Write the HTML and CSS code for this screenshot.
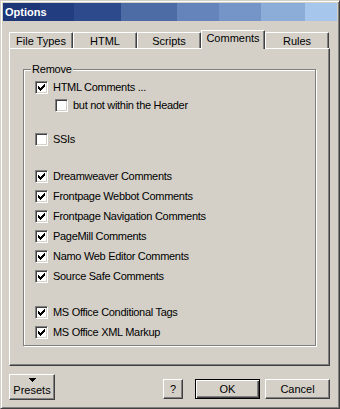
FILE: index.html
```html
<!DOCTYPE html>
<html>
<head>
<meta charset="utf-8">
<link rel="stylesheet" href="styles.css">
</head>
<body>
<div class="window">
  <div class="titlebar"><span class="title">Options</span></div>
  <div class="main">
    <div class="tabs">
      <div class="tab">File Types</div>
      <div class="tab">HTML</div>
      <div class="tab">Scripts</div>
      <div class="tab active">Comments</div>
      <div class="tab">Rules</div>
    </div>
    <div class="panel">
      <div class="group">
        <span class="legend">Remove</span>
        <div class="row first"><span class="cb"><svg width="7" height="7" viewBox="0 0 7 7" shape-rendering="crispEdges"><path d="M0 2h1v3h-1zM1 3h1v3h-1zM2 4h1v3h-1zM3 3h1v3h-1zM4 2h1v3h-1zM5 1h1v3h-1zM6 0h1v3h-1z" fill="#000"/></svg></span><span class="lbl">HTML Comments ...</span></div>
        <div class="row nested"><span class="cb"></span><span class="lbl">but not within the Header</span></div>
        <div class="row sep1"><span class="cb"></span><span class="lbl">SSIs</span></div>
        <div class="row sep2"><span class="cb"><svg width="7" height="7" viewBox="0 0 7 7" shape-rendering="crispEdges"><path d="M0 2h1v3h-1zM1 3h1v3h-1zM2 4h1v3h-1zM3 3h1v3h-1zM4 2h1v3h-1zM5 1h1v3h-1zM6 0h1v3h-1z" fill="#000"/></svg></span><span class="lbl">Dreamweaver Comments</span></div>
        <div class="row"><span class="cb"><svg width="7" height="7" viewBox="0 0 7 7" shape-rendering="crispEdges"><path d="M0 2h1v3h-1zM1 3h1v3h-1zM2 4h1v3h-1zM3 3h1v3h-1zM4 2h1v3h-1zM5 1h1v3h-1zM6 0h1v3h-1z" fill="#000"/></svg></span><span class="lbl">Frontpage Webbot Comments</span></div>
        <div class="row"><span class="cb"><svg width="7" height="7" viewBox="0 0 7 7" shape-rendering="crispEdges"><path d="M0 2h1v3h-1zM1 3h1v3h-1zM2 4h1v3h-1zM3 3h1v3h-1zM4 2h1v3h-1zM5 1h1v3h-1zM6 0h1v3h-1z" fill="#000"/></svg></span><span class="lbl">Frontpage Navigation Comments</span></div>
        <div class="row"><span class="cb"><svg width="7" height="7" viewBox="0 0 7 7" shape-rendering="crispEdges"><path d="M0 2h1v3h-1zM1 3h1v3h-1zM2 4h1v3h-1zM3 3h1v3h-1zM4 2h1v3h-1zM5 1h1v3h-1zM6 0h1v3h-1z" fill="#000"/></svg></span><span class="lbl">PageMill Comments</span></div>
        <div class="row"><span class="cb"><svg width="7" height="7" viewBox="0 0 7 7" shape-rendering="crispEdges"><path d="M0 2h1v3h-1zM1 3h1v3h-1zM2 4h1v3h-1zM3 3h1v3h-1zM4 2h1v3h-1zM5 1h1v3h-1zM6 0h1v3h-1z" fill="#000"/></svg></span><span class="lbl">Namo Web Editor Comments</span></div>
        <div class="row"><span class="cb"><svg width="7" height="7" viewBox="0 0 7 7" shape-rendering="crispEdges"><path d="M0 2h1v3h-1zM1 3h1v3h-1zM2 4h1v3h-1zM3 3h1v3h-1zM4 2h1v3h-1zM5 1h1v3h-1zM6 0h1v3h-1z" fill="#000"/></svg></span><span class="lbl">Source Safe Comments</span></div>
        <div class="row sep3"><span class="cb"><svg width="7" height="7" viewBox="0 0 7 7" shape-rendering="crispEdges"><path d="M0 2h1v3h-1zM1 3h1v3h-1zM2 4h1v3h-1zM3 3h1v3h-1zM4 2h1v3h-1zM5 1h1v3h-1zM6 0h1v3h-1z" fill="#000"/></svg></span><span class="lbl">MS Office Conditional Tags</span></div>
        <div class="row"><span class="cb"><svg width="7" height="7" viewBox="0 0 7 7" shape-rendering="crispEdges"><path d="M0 2h1v3h-1zM1 3h1v3h-1zM2 4h1v3h-1zM3 3h1v3h-1zM4 2h1v3h-1zM5 1h1v3h-1zM6 0h1v3h-1z" fill="#000"/></svg></span><span class="lbl">MS Office XML Markup</span></div>
      </div>
    </div>
    <div class="buttons">
      <div class="btn presets"><svg class="arrow" width="7" height="4" viewBox="0 0 7 4" shape-rendering="crispEdges"><path d="M0 0h7v1h-1v1h-1v1h-1v1h-1v-1h-1v-1h-1v-1h-1z" fill="#000"/></svg><span>Presets</span></div>
      <div class="right">
        <div class="btn help">?</div>
        <div class="btn ok">OK</div>
        <div class="btn cancel">Cancel</div>
      </div>
    </div>
  </div>
</div>
</body>
</html>
```

FILE: styles.css
```css
* { box-sizing: border-box; margin: 0; padding: 0; }
html, body { background: #d4d0c8; }
body {
  margin: 0;
  font-family: "Liberation Sans", Arial, sans-serif;
  font-size: 11px;
  color: #000;
}
.window {
  width: 340px;
  height: 409px;
  background: #d4d0c8;
  border: 1px solid;
  border-color: #d4d0c8 #404040 #404040 #d4d0c8;
  box-shadow: inset 1px 1px #ffffff, inset -1px -1px #808080;
  padding: 2px;
  display: flex;
  flex-direction: column;
}
.titlebar {
  height: 18px;
  display: flex;
  align-items: center;
  padding-left: 2px;
  background: linear-gradient(to right,
    #1d3678 0, #1d3678 37px,
    #223d80 37px, #223d80 71px,
    #2c4a8c 71px, #2c4a8c 118px,
    #4d6ba4 118px, #4d6ba4 174px,
    #6584bc 174px, #6584bc 216px,
    #7595c8 216px, #7595c8 258px,
    #8badd8 258px, #8badd8 302px,
    #a6c6ec 302px, #a6c6ec 334px);
}
.title {
  color: #fff;
  font-weight: bold;
  font-size: 11px;
}
.main {
  flex: 1;
  padding: 9px 7px 0 6px;
  display: flex;
  flex-direction: column;
}
.tabs {
  display: flex;
  align-items: flex-end;
  height: 18px;
}
.tab {
  width: 64px;
  height: 16px;
  border-top: 1px solid #fff;
  border-left: 1px solid #fff;
  border-right: 1px solid #404040;
  border-top-left-radius: 1px;
  border-top-right-radius: 1px;
  box-shadow: inset -1px 0 #808080;
  text-align: center;
  line-height: 14px;
  padding-top: 1px;
  background: #d4d0c8;
}
.tab.active {
  height: 19px;
  margin-bottom: -1px;
  position: relative;
  z-index: 1;
  line-height: 14px;
  padding-top: 0;
}
.panel {
  width: 321px;
  height: 318px;
  border: 1px solid;
  border-color: #fff #404040 #404040 #fff;
  box-shadow: inset -1px -1px #808080;
  padding: 20px 0 0 13px;
}
.group {
  position: relative;
  width: 293px;
  height: 277px;
  border: 1px solid #808080;
  box-shadow: inset 1px 1px #fff, 1px 1px #fff;
  padding: 11px 0 0 11px;
}
.legend {
  position: absolute;
  left: 7px;
  top: -8px;
  padding: 0 1px;
  line-height: 14px;
  letter-spacing: -0.2px;
  background: #d4d0c8;
}
.row {
  display: flex;
  align-items: center;
  height: 13px;
  margin-top: 7px;
}
.row.first { margin-top: 0; }
.row.nested { margin-top: 5px; margin-left: 20px; }
.row.sep1 { margin-top: 21px; }
.row.sep2 { margin-top: 24px; }
.row.sep3 { margin-top: 23px; }
.cb {
  width: 13px;
  height: 13px;
  flex: none;
  background: #fff;
  border: 1px solid;
  border-color: #808080 #fff #fff #808080;
  box-shadow: inset 1px 1px #404040, inset -1px -1px #d4d0c8;
  display: flex;
  align-items: center;
  justify-content: center;
}
.cb svg { display: block; }
.lbl {
  margin-left: 5px;
  line-height: 13px;
  letter-spacing: -0.3px;
  white-space: nowrap;
}
.buttons {
  display: flex;
  justify-content: space-between;
  align-items: flex-start;
  margin-top: 8px;
  width: 321px;
}
.btn {
  background: #d4d0c8;
  border: 1px solid;
  border-color: #fff #404040 #404040 #fff;
  box-shadow: inset -1px -1px #808080;
  display: flex;
  align-items: center;
  justify-content: center;
  height: 20px;
}
.presets {
  width: 46px;
  height: 26px;
  flex-direction: column;
  justify-content: flex-start;
  padding-top: 3px;
}
.presets .arrow { display: block; margin-bottom: 2px; }
.presets span { line-height: 13px; }
.right {
  display: flex;
  margin-top: 5px;
}
.help { width: 20px; margin-right: 12px; }
.ok {
  width: 65px;
  margin-right: 5px;
  border: 1px solid #000;
  box-shadow: inset 1px 1px #fff, inset -1px -1px #404040, inset -2px -2px #808080;
}
.cancel { width: 65px; }
```
